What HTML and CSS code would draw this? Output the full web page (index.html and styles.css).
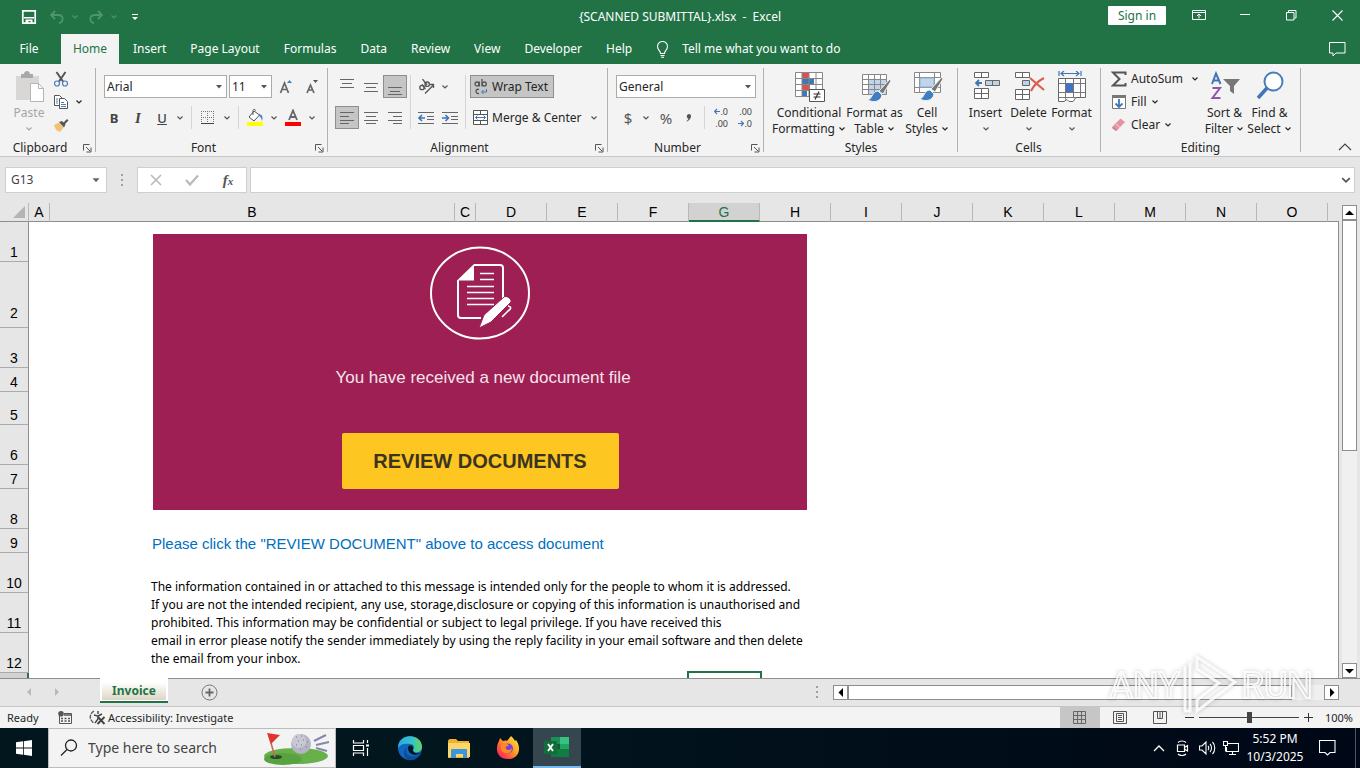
FILE: index.html
```html
<!DOCTYPE html>
<html lang="en">
<head>
<meta charset="utf-8">
<title>{SCANNED SUBMITTAL}.xlsx - Excel</title>
<link rel="stylesheet" href="styles.css">
</head>
<body>
<svg class="defs" aria-hidden="true">
  <symbol id="chev" viewBox="0 0 8 6"><path d="M1.500 1.500 4 4 6.500 1.500" fill="none" stroke="currentColor" stroke-width="1.200"/></symbol>
  <symbol id="tri" viewBox="0 0 8 6"><path d="M1 1h6L4 4.500z" fill="currentColor"/></symbol>
  <symbol id="launch" viewBox="0 0 9 9"><path d="M.5 6.500V.5h6M3 3l4 4M8 3.500V8H3.500" fill="none" stroke="#555"/></symbol>
</svg>

<header class="titlebar">
  <div class="quick">
    <button class="qbtn" aria-label="Save"><svg width="16" height="16" viewBox="0 0 16 16"><path d="M1.800 1.800h12.400v12.400H1.800z" fill="none" stroke="#fff" stroke-width="1.700"/><path d="M3 8h10v1.500H3zM4.500 10.500h7V14h-2v-2H7.500v2h-3z" fill="#fff"/></svg></button>
    <button class="qbtn dim" aria-label="Undo"><svg width="16" height="14" viewBox="0 0 16 14"><path d="M6 1 2 5l4 4M2.500 5H9c6 0 6 7 1 8" fill="none" stroke="currentColor" stroke-width="1.800"/></svg></button>
    <button class="qchev dim" aria-label="Undo list"><svg width="8" height="6"><use href="#chev"/></svg></button>
    <button class="qbtn dim" aria-label="Redo"><svg width="16" height="14" viewBox="0 0 16 14"><path d="M10 1l4 4-4 4M13.500 5H7C1 5 1 12 6 13" fill="none" stroke="currentColor" stroke-width="1.800"/></svg></button>
    <button class="qchev dim" aria-label="Redo list"><svg width="8" height="6"><use href="#chev"/></svg></button>
    <button class="qbtn" aria-label="Customize Quick Access Toolbar"><svg width="8" height="8" viewBox="0 0 8 8"><path d="M1 1.500h6" stroke="#fff"/><path d="M1 4h6L4 7z" fill="#fff"/></svg></button>
  </div>
  <h1 class="doc-title">{SCANNED SUBMITTAL}.xlsx&nbsp; -&nbsp; Excel</h1>
  <div class="window">
    <button class="signin">Sign in</button>
    <button class="wbtn" aria-label="Ribbon display options"><svg width="14" height="12" viewBox="0 0 14 12"><path d="M.5 1.500h13v9H.5zM.5 3.500h13M7 9.500V5M5 7l2-2 2 2" fill="none" stroke="#fff"/></svg></button>
    <button class="wbtn" aria-label="Minimize"><svg width="10" height="10" viewBox="0 0 10 10"><path d="M0 4.500h10" stroke="#fff"/></svg></button>
    <button class="wbtn" aria-label="Restore"><svg width="11" height="11" viewBox="0 0 11 11"><path d="M.5 2.500h7.500v7.500H.5zM2.500 2V.5H10V8H8.500" fill="none" stroke="#fff"/></svg></button>
    <button class="wbtn" aria-label="Close"><svg width="11" height="11" viewBox="0 0 11 11"><path d="M.5.5l10 10M10.500.5l-10 10" stroke="#fff" stroke-width="1.100"/></svg></button>
  </div>
</header>

<nav class="tabs">
  <button class="tab file">File</button>
  <button class="tab on">Home</button>
  <button class="tab">Insert</button>
  <button class="tab">Page Layout</button>
  <button class="tab">Formulas</button>
  <button class="tab">Data</button>
  <button class="tab">Review</button>
  <button class="tab">View</button>
  <button class="tab">Developer</button>
  <button class="tab">Help</button>
  <button class="tab tell"><svg width="13" height="17" viewBox="0 0 13 17"><path d="M4.500 12.500C4.500 9.500 1.500 9 1.500 5.500a5 5 0 0 1 10 0c0 3.500-3 4-3 7zM4.500 14.500h4M5 16.300h3" fill="none" stroke="#fff" stroke-width="1.100"/></svg>Tell me what you want to do</button>
  <button class="comment" aria-label="Comments"><svg width="17" height="15" viewBox="0 0 17 15"><path d="M.5.5h15.500v10.500H7l-3 3v-3H.5z" fill="none" stroke="#fff"/></svg></button>
</nav>

<section class="ribbon">
  <div class="group clipboard">
    <div class="body big-row">
      <button class="big w-paste faded"><svg width="32" height="32" viewBox="0 0 32 32"><path d="M3 5h23v24H3z" fill="#d9d6d6"/><path d="M8 3h3c0-4 6-4 6 0h3v4H8z" fill="#a9a9a9"/><path d="M17.500 12.500h8l5 5v13h-13z" fill="#fff" stroke="#b5b5b5"/><path d="M25.500 12.500v5h5" fill="none" stroke="#b5b5b5"/></svg><span>Paste</span><svg width="8" height="6"><use href="#chev"/></svg></button>
      <div class="stack">
        <button class="line" aria-label="Cut"><svg width="16" height="16" viewBox="0 0 16 16"><path d="M3.500 1 10 10.500M12.500 1 6 10.500" stroke="#555" stroke-width="2" fill="none"/><circle cx="4" cy="12.500" r="2.500" fill="none" stroke="#4a7ebb" stroke-width="1.200"/><circle cx="12" cy="12.500" r="2.500" fill="none" stroke="#4a7ebb" stroke-width="1.200"/></svg></button>
        <button class="line" aria-label="Copy"><svg width="16" height="16" viewBox="0 0 16 16"><path d="M1.500 1.500h5l3 3v7h-8z" fill="#fff" stroke="#555"/><path d="M6.500 4.500h5l3 3v7h-8z" fill="#fff" stroke="#555"/><path d="M8 8.500h3M8 10.500h5M8 12.500h5M3 5h2M3 7h2M3 9h2" stroke="#4a7ebb"/></svg><svg class="far" width="8" height="6"><use href="#chev"/></svg></button>
        <button class="line" aria-label="Format Painter"><svg width="16" height="16" viewBox="0 0 16 16"><path d="M1 8l5-2.500 4.500 5L7 15 3 13z" fill="#f0c274"/><path d="M6 5l3-1 3.500 3.500-1.500 3z" fill="#555"/><path d="M10 6l4-4 1.500 1.500-4 4z" fill="#555"/></svg></button>
      </div>
    </div>
    <div class="caption"><span>Clipboard</span><button class="launch" aria-label="Clipboard options"><svg width="9" height="9"><use href="#launch"/></svg></button></div>
  </div>

  <div class="group font">
    <div class="body rows">
      <div class="row first">
        <span class="combo font-name"><select aria-label="Font"><option>Arial</option></select><svg width="8" height="6"><use href="#tri"/></svg></span>
        <span class="combo font-size"><select aria-label="Font size"><option>11</option></select><svg width="8" height="6"><use href="#tri"/></svg></span>
        <button class="ib" aria-label="Increase font size"><svg width="16" height="16" viewBox="0 0 16 16"><path d="M2.500 14 6.500 4l4 10M4 10.500h5" fill="none" stroke="#666" stroke-width="1.700"/><path d="M9 4l2.500-3L14 4z" fill="#4a7ebb"/></svg></button>
        <button class="ib" aria-label="Decrease font size"><svg width="16" height="16" viewBox="0 0 16 16"><path d="M3 14 6.500 6 10 14M4.500 11h4" fill="none" stroke="#666" stroke-width="1.700"/><path d="M9 1h5l-2.500 3z" fill="#555"/></svg></button>
      </div>
      <div class="row inset">
        <button class="ib glyph"><b>B</b></button>
        <button class="ib glyph serif"><i>I</i></button>
        <button class="ib glyph under"><u>U</u></button>
        <button class="cv" aria-label="Underline styles"><svg width="8" height="6"><use href="#chev"/></svg></button>
        <span class="sep"></span>
        <button class="ib" aria-label="Borders"><svg width="14" height="14" viewBox="0 0 14 14"><path d="M.5 0v13M6.500 0v13M12.500 0v13M0 .5h13M0 6.500h13" stroke="#777" stroke-dasharray="1 1" fill="none"/><path d="M0 12.500h13" stroke="#444"/></svg></button>
        <button class="cv" aria-label="Border styles"><svg width="8" height="6"><use href="#chev"/></svg></button>
        <span class="sep"></span>
        <button class="ib" aria-label="Fill color"><svg width="18" height="17" viewBox="0 0 18 17"><path d="M8 2 3 8l5 4 5.500-6z" fill="#fff" stroke="#555"/><path d="M7 6V1.500c0-1.500 2.500-1.500 2.500 0" fill="none" stroke="#555"/><path d="M13 5c4 1 4 4 3 7-1-3-1-4-3-5z" fill="#4a7ebb"/><path d="M1 13h16v4H1z" fill="#ff0"/></svg></button>
        <button class="cv" aria-label="Fill colors"><svg width="8" height="6"><use href="#chev"/></svg></button>
        <button class="ib" aria-label="Font color"><svg width="18" height="17" viewBox="0 0 18 17"><path d="M5 11 9 1.500 13 11M6.500 8h5" fill="none" stroke="#666" stroke-width="1.800"/><path d="M1 13h16v4H1z" fill="#f00"/></svg></button>
        <button class="cv" aria-label="Font colors"><svg width="8" height="6"><use href="#chev"/></svg></button>
      </div>
    </div>
    <div class="caption"><span>Font</span><button class="launch" aria-label="Font options"><svg width="9" height="9"><use href="#launch"/></svg></button></div>
  </div>

  <div class="group alignment">
    <div class="body blocks">
      <div class="rows">
        <div class="row">
          <button class="ib" aria-label="Top align"><svg width="14" height="18" viewBox="0 0 14 18"><path d="M0 1.500h14M2 5.500h10M0 9.500h14" stroke="#666"/></svg></button>
          <button class="ib" aria-label="Middle align"><svg width="14" height="18" viewBox="0 0 14 18"><path d="M0 5.500h14M2 9.500h10M0 13.500h14" stroke="#666"/></svg></button>
          <button class="ib pressed" aria-label="Bottom align"><svg width="14" height="18" viewBox="0 0 14 18"><path d="M0 9.500h14M2 13.500h10M0 16.500h14" stroke="#666"/></svg></button>
        </div>
        <div class="row">
          <button class="ib pressed" aria-label="Align left"><svg width="14" height="14" viewBox="0 0 14 14"><path d="M0 1.500h14M0 5.500h9M0 9.500h14M0 12.500h9" stroke="#666"/></svg></button>
          <button class="ib" aria-label="Center"><svg width="14" height="14" viewBox="0 0 14 14"><path d="M0 1.500h14M2 5.500h10M0 9.500h14M2 12.500h10" stroke="#666"/></svg></button>
          <button class="ib" aria-label="Align right"><svg width="14" height="14" viewBox="0 0 14 14"><path d="M0 1.500h14M5 5.500h9M0 9.500h14M5 12.500h9" stroke="#666"/></svg></button>
        </div>
      </div>
      <span class="sep tall"></span>
      <div class="rows">
        <div class="row">
          <button class="ib" aria-label="Orientation"><svg width="17" height="16" viewBox="0 0 17 16"><g fill="none" stroke="#555" stroke-width="1.300"><circle cx="4" cy="8.500" r="2.200"/><path d="M4 5.500l3.500 4.500"/><circle cx="9.200" cy="5.200" r="2.200"/><path d="M4.500 0l4.500 6"/><path d="M7 14.500 15.500 6M12 5.500H15.500V9"/></g></svg></button>
          <button class="cv" aria-label="Orientation list"><svg width="8" height="6"><use href="#chev"/></svg></button>
        </div>
        <div class="row">
          <button class="ib" aria-label="Decrease indent"><svg width="16" height="14" viewBox="0 0 16 14"><path d="M0 1.500h16M9 5.500h7M9 8.500h7M0 12.500h16" stroke="#666"/><path d="M7 7H1M4 4 1 7l3 3" fill="none" stroke="#3f76b8" stroke-width="1.600"/></svg></button>
          <button class="ib" aria-label="Increase indent"><svg width="16" height="14" viewBox="0 0 16 14"><path d="M0 1.500h16M9 5.500h7M9 8.500h7M0 12.500h16" stroke="#666"/><path d="M0 7h6M3.500 4l3 3-3 3" fill="none" stroke="#3f76b8" stroke-width="1.600"/></svg></button>
        </div>
      </div>
      <span class="sep tall"></span>
      <div class="rows">
        <div class="row"><button class="txt pressed"><svg width="14" height="18" viewBox="0 0 14 18"><g fill="none" stroke="#555" stroke-width="1.300"><circle cx="3" cy="6" r="2"/><path d="M5.300 3.500v5M8 1v7.500"/><circle cx="10.300" cy="6" r="2"/><path d="M5 11.500c-4-1.500-4 5 0 4"/></g><path d="M12.500 11v3H8M9.500 12 7.500 14l2 2" fill="none" stroke="#3f76b8"/></svg>Wrap Text</button></div>
        <div class="row"><button class="txt merge"><svg width="15" height="15" viewBox="0 0 15 15"><path d="M.5.5h14v14H.5zM.5 4.500h14M.5 10.500h14M7.500.5v4M7.500 10.500v4" fill="#fff" stroke="#555"/><path d="M2.500 7.500h10M4.500 5.500l-2 2 2 2M10.500 5.500l2 2-2 2" fill="none" stroke="#3f76b8"/></svg>Merge &amp; Center</button><button class="cv" aria-label="Merge list"><svg width="8" height="6"><use href="#chev"/></svg></button></div>
      </div>
    </div>
    <div class="caption"><span>Alignment</span><button class="launch" aria-label="Alignment options"><svg width="9" height="9"><use href="#launch"/></svg></button></div>
  </div>

  <div class="group number">
    <div class="body rows">
      <div class="row first"><span class="combo format"><select aria-label="Number format"><option>General</option></select><svg width="8" height="6"><use href="#tri"/></svg></span></div>
      <div class="row">
        <button class="ib glyph large">$</button>
        <button class="cv" aria-label="Currency list"><svg width="8" height="6"><use href="#chev"/></svg></button>
        <button class="ib glyph large">%</button>
        <button class="ib" aria-label="Comma style"><svg width="6" height="8" viewBox="0 0 6 8"><path d="M3 0c3 0 3 5-2 7.500L.5 7C2 6 2.500 5 2.300 4.500 0 4 .5 0 3 0z" fill="#555"/></svg></button>
        <span class="sep"></span>
        <button class="ib dec" aria-label="Increase decimal"><span><svg width="6" height="7" viewBox="0 0 6 7"><path d="M6 3.500H1M3 1 .5 3.500 3 6" fill="none" stroke="#3f76b8" stroke-width="1.200"/></svg>.0</span><span>.00</span></button>
        <button class="ib dec" aria-label="Decrease decimal"><span>.00</span><span><svg width="6" height="7" viewBox="0 0 6 7"><path d="M0 3.500h5M3 1l2.500 2.500L3 6" fill="none" stroke="#3f76b8" stroke-width="1.200"/></svg>.0</span></button>
      </div>
    </div>
    <div class="caption"><span>Number</span><button class="launch" aria-label="Number options"><svg width="9" height="9"><use href="#launch"/></svg></button></div>
  </div>

  <div class="group styles">
    <div class="body big-row">
      <button class="big w-cond"><svg width="32" height="32" viewBox="0 0 32 32"><path d="M2.500 1.500h27v24h-27z" fill="#fff"/><path d="M9 2h7v6H9zM9 14h8v6H9z" fill="#d9534a"/><path d="M9 8h12v6H9zM9 20h5v6H9z" fill="#3f76b8"/><path d="M2.500 1.500h27v24h-27zM2.500 7.500h27M2.500 13.500h27M2.500 19.500h27M9 1.500v24M16 1.500v24M23 1.500v24" fill="none" stroke="#888"/><path d="M16.500 18.500h15v12h-15z" fill="#fff" stroke="#555"/><path d="M20.500 23h7M20.500 26h7M26 20.500l-4 8" stroke="#333" stroke-width="1.200"/></svg><span>Conditional</span><span>Formatting <svg width="8" height="6"><use href="#chev"/></svg></span></button>
      <button class="big w-table"><svg width="32" height="32" viewBox="0 0 32 32"><path d="M3.500 3.500h24v20h-24z" fill="#fff"/><path d="M10 9h18v15H10z" fill="#c0d4ea"/><path d="M3.500 3.500h24v20h-24zM3.500 8.500h24M3.500 13.500h24M3.500 18.500h24M9.500 3.500v20M15.500 3.500v20M21.500 3.500v20" fill="none" stroke="#888"/><path d="M31 8l1 2-8 13-4-3z" fill="#777" stroke="#f3f3f3"/><path d="M19 20c-6 0-5 7-10 9 5 3 13 2 14-5z" fill="#3f7fc1" stroke="#f3f3f3"/></svg><span>Format as</span><span>Table <svg width="8" height="6"><use href="#chev"/></svg></span></button>
      <button class="big w-cell"><svg width="32" height="32" viewBox="0 0 32 32"><path d="M3.500 1.500h26v20h-26z" fill="#fff" stroke="#888"/><path d="M3.500 6.500h26M3.500 16.500h26M8.500 1.500v20M23.500 1.500v20" stroke="#888"/><path d="M9 7h14v9H9z" fill="#c0d4ea" stroke="#8fb0d8"/><path d="M31 6l1 2-8 13-4-3z" fill="#777" stroke="#f3f3f3"/><path d="M19 19c-6 0-5 7-10 9 5 3 13 2 14-5z" fill="#3f7fc1" stroke="#f3f3f3"/></svg><span>Cell</span><span>Styles <svg width="8" height="6"><use href="#chev"/></svg></span></button>
    </div>
    <div class="caption"><span>Styles</span></div>
  </div>

  <div class="group cells">
    <div class="body big-row">
      <button class="big w-insert"><svg width="32" height="32" viewBox="0 0 32 32"><path d="M4.500 1.500h14v5h-14zM11.500 1.500v5M4.500 17.500h14v10h-14zM11.500 17.500v10M4.500 22.500h14" fill="#fff" stroke="#666"/><path d="M15.500 9.500h14v5h-14z" fill="#bcd3ea" stroke="#666"/><path d="M22.500 9.500v5" stroke="#666"/><path d="M12 12H6M9 9l-3 3 3 3" fill="none" stroke="#3f76b8" stroke-width="1.800"/></svg><span>Insert</span><svg width="8" height="6"><use href="#chev"/></svg></button>
      <button class="big w-insert"><svg width="32" height="32" viewBox="0 0 32 32"><path d="M2.500 1.500h14v5h-14zM9.500 1.500v5M2.500 18.500h14v10h-14zM9.500 18.500v10M2.500 23.500h14" fill="#fff" stroke="#666"/><path d="M9.500 9.500h7v5h-7z" fill="#bcd3ea" stroke="#666"/><path d="M17 7l14 12M31 7C25 10 21 14 18 20" fill="none" stroke="#d9604c" stroke-width="2.200"/></svg><span>Delete</span><svg width="8" height="6"><use href="#chev"/></svg></button>
      <button class="big w-insert"><svg width="32" height="32" viewBox="0 0 32 32"><path d="M3 0v5M25 0v5M5 2.500h18M8 0 5 2.500 8 5M20 0l3 2.500L20 5" fill="none" stroke="#3f76b8" stroke-width="1.200"/><path d="M2.500 7.500h27v19H20l-3 4h-4l-2-2-3 2H2.500z" fill="#fff" stroke="#666"/><path d="M2.500 12.500h27M2.500 21.500h27M9.500 7.500v21M17.500 7.500v19M24.500 7.500v19M2.500 26.500h18" fill="none" stroke="#777"/><path d="M10 12h7v9h-7z" fill="#4472c4"/></svg><span>Format</span><svg width="8" height="6"><use href="#chev"/></svg></button>
    </div>
    <div class="caption"><span>Cells</span></div>
  </div>

  <div class="group editing">
    <div class="body big-row">
      <div class="stack wide">
        <button class="line"><svg width="16" height="16" viewBox="0 0 16 16"><path d="M14.500 4V1.500H2L8.500 8 2 14.500h12.500V12" fill="none" stroke="#555" stroke-width="2"/></svg><span>AutoSum</span><svg class="far" width="8" height="6"><use href="#chev"/></svg></button>
        <button class="line"><svg width="16" height="16" viewBox="0 0 16 16"><path d="M1.500 1.500h13v13h-13z" fill="#fff" stroke="#777"/><path d="M1 1h14v3H1z" fill="#777"/><path d="M8 5v8M4.500 9.500 8 13l3.500-3.500" fill="none" stroke="#3f76b8" stroke-width="1.800"/></svg><span>Fill</span><svg width="8" height="6"><use href="#chev"/></svg></button>
        <button class="line"><svg width="16" height="16" viewBox="0 0 16 16"><path d="M2 9l7.500-7.500L14 5 6.500 13z" fill="#e493a5"/><path d="M2 9l4.500 4-1.500 1-4-3z" fill="#d9748b"/><path d="M4.500 6.500 9 10.500" stroke="#f6d5dc"/></svg><span>Clear</span><svg width="8" height="6"><use href="#chev"/></svg></button>
      </div>
      <button class="big w-find"><svg width="32" height="32" viewBox="0 0 32 32"><path d="M3 13 7 2.500 11.500 13M4.500 9.500H10" fill="none" stroke="#3f76b8" stroke-width="2"/><path d="M3.500 17H11L3.500 27H11.500" fill="none" stroke="#9355a8" stroke-width="2"/><path d="M14 8h17l-6 7v8l-4-3v-5z" fill="#777"/></svg><span>Sort &amp;</span><span>Filter <svg width="8" height="6"><use href="#chev"/></svg></span></button>
      <button class="big w-find"><svg width="32" height="32" viewBox="0 0 32 32"><circle cx="19.500" cy="10.500" r="9" fill="#fff" stroke="#4a7ebb" stroke-width="2"/><path d="M13 17 4 27" stroke="#3f76b8" stroke-width="3.500"/></svg><span>Find &amp;</span><span>Select <svg width="8" height="6"><use href="#chev"/></svg></span></button>
    </div>
    <div class="caption"><span>Editing</span></div>
  </div>
  <button class="collapse" aria-label="Collapse ribbon"><svg width="14" height="8" viewBox="0 0 14 8"><path d="M1 7l6-6 6 6" fill="none" stroke="#444" stroke-width="1.200"/></svg></button>
</section>

<section class="formula">
  <label class="namebox"><input type="text" value="G13" aria-label="Name box"><svg width="10" height="7" viewBox="0 0 8 6"><use href="#tri"/></svg></label>
  <span class="dots"></span>
  <div class="fbuttons">
    <button aria-label="Cancel"><svg width="12" height="12" viewBox="0 0 12 12"><path d="M1 1l10 10M11 1 1 11" stroke="#b9b9b9" stroke-width="1.600"/></svg></button>
    <button aria-label="Enter"><svg width="14" height="12" viewBox="0 0 14 12"><path d="M1 6l4 4.500L13 1.500" fill="none" stroke="#b9b9b9" stroke-width="2.200"/></svg></button>
    <button class="fx" aria-label="Insert function"><i>f<small>x</small></i></button>
  </div>
  <label class="finput"><input type="text" aria-label="Formula bar"><svg width="10" height="8" viewBox="0 0 8 6"><path d="M1 1.500 4 4.500 7 1.500" fill="none" stroke="#555" stroke-width="1.400"/></svg></label>
</section>

<main class="sheet">
  <div class="grid">
    <table>
      <colgroup><col class="c-head"><col class="c-a"><col class="c-b"><col class="c-a"><col class="c-n"><col class="c-n"><col class="c-n"><col class="c-n"><col class="c-n"><col class="c-n"><col class="c-n"><col class="c-n"><col class="c-n"><col class="c-n"><col class="c-n"><col class="c-n"><col></colgroup>
      <thead><tr><th class="corner"><svg width="12" height="12" viewBox="0 0 12 12"><path d="M12 0v12H0z" fill="#b4b4b4"/></svg></th><th>A</th><th>B</th><th>C</th><th>D</th><th>E</th><th>F</th><th class="active">G</th><th>H</th><th>I</th><th>J</th><th>K</th><th>L</th><th>M</th><th>N</th><th>O</th><th></th></tr></thead>
      <tbody>
        <tr class="h40"><th>1</th><td colspan="16"></td></tr>
        <tr class="h66"><th>2</th><td colspan="16"></td></tr>
        <tr class="h40"><th>3</th><td colspan="16"></td></tr>
        <tr class="h24"><th>4</th><td colspan="16"></td></tr>
        <tr class="h33"><th>5</th><td colspan="16"></td></tr>
        <tr class="h40"><th>6</th><td colspan="16"></td></tr>
        <tr class="h24"><th>7</th><td colspan="16"></td></tr>
        <tr class="h40"><th>8</th><td colspan="16"></td></tr>
        <tr class="h24"><th>9</th><td></td><td class="note" colspan="15">Please click the "REVIEW DOCUMENT" above to access document</td></tr>
        <tr class="h40"><th>10</th><td colspan="16"></td></tr>
        <tr class="h40"><th>11</th><td colspan="16"></td></tr>
        <tr class="h40"><th>12</th><td colspan="16"></td></tr>
        <tr class="h24 current"><th></th><td colspan="6"></td><td class="selected"></td><td colspan="9"></td></tr>
      </tbody>
    </table>
    <div class="banner">
      <svg width="102" height="94" viewBox="0 0 102 94"><ellipse cx="51" cy="47" rx="49" ry="45.500" fill="none" stroke="#fff" stroke-width="2"/><path d="M29 34v35c0 2 1 3 3 3h20M74 54V22c0-2-1-3-3-3H45" fill="none" stroke="#fff" stroke-width="2"/><path d="M28 34.500 45 18v16.500z" fill="#fff"/><path d="M51 27.500h14M51 33.500h14M38 40.500h27M38 46.500h27M38 52.500h27M38 58.500h27" stroke="#fff" stroke-width="1.600"/><path d="M50 82l5-13 20-18c2-2 8 2 7 5L62 76z" fill="#fff" stroke="#9d1f53"/><path d="M79 60c4 1 3 3 0 5l-6 6" fill="none" stroke="#fff" stroke-width="1.600"/></svg>
      <p>You have received a new document file</p>
      <a class="review" href="#">REVIEW DOCUMENTS</a>
    </div>
    <p class="legal">The information contained in or attached to this message is intended only for the people to whom it is addressed.<br>If you are not the intended recipient, any use, storage,disclosure or copying of this information is unauthorised and<br>prohibited. This information may be confidential or subject to legal privilege. If you have received this<br>email in error please notify the sender immediately by using the reply facility in your email software and then delete<br>the email from your inbox.</p>
  </div>
  <div class="vscroll">
    <button class="sb" aria-label="Scroll up"><svg width="9" height="6" viewBox="0 0 9 6"><path d="M4.500.5 9 5H0z" fill="#000"/></svg></button>
    <div class="vthumb"></div>
    <div class="vtrack"></div>
    <button class="sb" aria-label="Scroll down"><svg width="9" height="6" viewBox="0 0 9 6"><path d="M4.500 5.500 9 1H0z" fill="#000"/></svg></button>
  </div>
</main>

<section class="sheettabs">
  <div class="arrows">
    <button aria-label="Previous sheet"><svg width="6" height="8" viewBox="0 0 6 8"><path d="M5 0v8L1 4z" fill="#b9b9b9"/></svg></button>
    <button aria-label="Next sheet"><svg width="6" height="8" viewBox="0 0 6 8"><path d="M1 0v8l4-4z" fill="#b9b9b9"/></svg></button>
  </div>
  <button class="sheettab">Invoice</button>
  <button class="add" aria-label="New sheet"><svg width="17" height="17" viewBox="0 0 17 17"><circle cx="8.500" cy="8.500" r="7.500" fill="none" stroke="#777"/><path d="M8.500 4.500v8M4.500 8.500h8" stroke="#666" stroke-width="1.800"/></svg></button>
  <span class="dots push"></span>
  <div class="hscroll">
    <button class="sb" aria-label="Scroll left"><svg width="6" height="9" viewBox="0 0 6 9"><path d="M5 0v9L.5 4.500z" fill="#000"/></svg></button>
    <div class="hthumb"></div>
    <div class="htrack"></div>
    <button class="sb" aria-label="Scroll right"><svg width="6" height="9" viewBox="0 0 6 9"><path d="M1 0v9l4.500-4.500z" fill="#000"/></svg></button>
  </div>
</section>

<footer class="status">
  <span class="ready">Ready</span>
  <button aria-label="Record macro" class="macro"><svg width="14" height="13" viewBox="0 0 14 13"><path d="M1.500 4v8.500h12V2.500H6" fill="none" stroke="#555"/><circle cx="3" cy="2.800" r="2.800" fill="#555"/><path d="M6 4h7M3 7.500h2M6.500 7.500h2M10 7.500h2M3 10h2M6.500 10h2M10 10h2" stroke="#555" stroke-width="1.300"/></svg></button>
  <button class="access"><svg width="17" height="15" viewBox="0 0 17 15"><path d="M5 1C0 4 0 10 5 13" fill="none" stroke="#555" stroke-width="1.300" stroke-dasharray="4 1"/><path d="M5 5l4 1v3l-3 4M9 6l4-2M9 1v3" fill="none" stroke="#444" stroke-width="1.400"/><path d="M9 7l6.500 7M15.500 7l-7 7" stroke="#444" stroke-width="1.900"/></svg>Accessibility: Investigate</button>
  <div class="views">
    <button class="on" aria-label="Normal"><svg width="14" height="13" viewBox="0 0 14 13"><path d="M.5.5h12v12H.5zM.5 4.500h12M.5 8.500h12M4.500.5v12M8.500.5v12" fill="none" stroke="#666"/></svg></button>
    <button aria-label="Page layout"><svg width="14" height="13" viewBox="0 0 14 13"><path d="M.5.5h13v12H.5zM3.500 2.500h7v8h-7zM5 4.500h4M5 6.500h4M5 8.500h4" fill="none" stroke="#555"/></svg></button>
    <button aria-label="Page break preview"><svg width="14" height="13" viewBox="0 0 14 13"><path d="M.5.5h13v12H.5zM4.500.5v7h5v-7M7 .5v7" fill="none" stroke="#555"/></svg></button>
  </div>
  <button class="zoom-step" aria-label="Zoom out"><svg width="9" height="9" viewBox="0 0 9 9"><path d="M0 4.500h9" stroke="#333"/></svg></button>
  <input class="zoom" type="range" min="0" max="100" value="50" aria-label="Zoom">
  <button class="zoom-step" aria-label="Zoom in"><svg width="9" height="9" viewBox="0 0 9 9"><path d="M0 4.500h9M4.500 0v9" stroke="#333"/></svg></button>
  <span class="percent">100%</span>
</footer>

<div class="taskbar">
  <button class="tb" aria-label="Start"><svg width="16" height="16" viewBox="0 0 16 16"><path d="M0 2.300 7 1.300V7.600H0zM7.800 1.200 16 0v7.600H7.800zM0 8.400h7v6.300L0 13.700zM7.800 8.400H16V16l-8.200-1.200z" fill="#fff"/></svg></button>
  <label class="search"><svg width="18" height="18" viewBox="0 0 18 18"><circle cx="11" cy="6.500" r="5.500" fill="none" stroke="#222" stroke-width="1.300"/><path d="M7 10.500 1 16.500" stroke="#222" stroke-width="1.300"/></svg><input type="text" placeholder="Type here to search" aria-label="Type here to search"><svg width="68" height="36" viewBox="0 0 68 36"><ellipse cx="33" cy="26" rx="32" ry="8" fill="#68b04a"/><ellipse cx="20" cy="29" rx="19" ry="6" fill="#58a23f"/><ellipse cx="13" cy="27" rx="6" ry="2" fill="#234c2b"/><path d="M6 6l6 21" stroke="#cc6a58" stroke-width="1.600"/><path d="M4 3l13 2-9 9z" fill="#e0342e"/><circle cx="38" cy="14" r="10" fill="#b5b4c4"/><circle cx="36" cy="11" r="7" fill="#c9c9d6"/><path d="M33 7h1M38 6h1M35 11h1M40 10h1M44 12h1M33 15h1M38 15h1M43 17h1M37 19h1" stroke="#8e8da4" stroke-width="1.500"/><path d="M51 11l12-6M53 15l13-3M53 18l11 3" stroke="#8587ad" stroke-width="2"/></svg></label>
  <div class="apps">
    <button class="tb" aria-label="Task view"><svg width="17" height="16" viewBox="0 0 17 16"><path d="M1.500 0v3h10V0M1.500 5.500h10v5h-10zM1.500 16v-3h10v3M15.500 0v3M15.500 8v8" fill="none" stroke="#fff" stroke-width="1.200"/><path d="M14 4.500h3v2h-3z" fill="#fff"/></svg></button>
    <button class="tb" aria-label="Edge"><svg width="26" height="26" viewBox="0 0 26 26"><defs><linearGradient id="eg" x1="0" x2="1"><stop offset="0" stop-color="#2aa7e8"/><stop offset=".6" stop-color="#35c5c4"/><stop offset="1" stop-color="#6ad35a"/></linearGradient></defs><circle cx="13" cy="13" r="12" fill="#1167bd"/><path d="M1 13C1 -3 25 -2 25 12c0 6-9 7-9 3 2-2 1-6-3-6C8 8 3 9 1 13z" fill="url(#eg)"/><path d="M9.500 13c-2 6 3 11 13 7-3 5-8 6-11 5-5-2-6-9-2-12z" fill="#0c4c98"/><path d="M11 14c-1-3 3-5 5-2 1 2-1 3 0 4 2 3 5 3 8 1-4 5-12 3-13-3z" fill="#02161e"/></svg></button>
    <button class="tb" aria-label="File Explorer"><svg width="22" height="19" viewBox="0 0 22 19"><path d="M0 2c0-1 1-2 2-2h6l2 2h11v17H0z" fill="#f0b030"/><path d="M0 4h22v14H0z" fill="#fcd667"/><path d="M4 10h14c1 0 1 1 1 1v8h-4v-4H8v4H3v-7c0-1 0-2 1-2z" fill="#3b97dd"/></svg></button>
    <button class="tb" aria-label="Firefox"><svg width="24" height="24" viewBox="0 0 24 24"><defs><linearGradient id="fg" x1="1" y1="0" x2="0" y2="1"><stop offset="0" stop-color="#fff04a"/><stop offset=".45" stop-color="#ff9a22"/><stop offset=".8" stop-color="#ff3850"/><stop offset="1" stop-color="#e31587"/></linearGradient></defs><path d="M3 5l1-3 3 3c1 0 3-1 4 0l4-5c2 2 3 3 4 5l1-1c6 8 3 19-8 19C0 23-1 12 3 5z" fill="url(#fg)"/><circle cx="12" cy="12.500" r="5" fill="#7542d6"/><path d="M5 9c3-2 6-2 8 1-3 0-4 1-3 3 2 2 4 1 6-1 0 4-3 6-6 5-4 0-6-4-5-8z" fill="#ff8a24"/></svg></button>
    <button class="tb running" aria-label="Excel"><svg width="26" height="22" viewBox="0 0 26 22"><path d="M7 1h18v20H7z" fill="#21a366"/><path d="M7 1h9v7H7z" fill="#1b8f58"/><path d="M16 1h9v7h-9z" fill="#33c481"/><path d="M7 13h18v8H7z" fill="#107c41"/><path d="M7 8h9v5H7z" fill="#185c37"/><path d="M0 5h13v13H0z" fill="#0f6f3a"/><path d="M4 8l5 7M9 8l-5 7" stroke="#fff" stroke-width="1.900"/></svg></button>
  </div>
  <div class="tray">
    <button aria-label="Show hidden icons"><svg width="12" height="8" viewBox="0 0 12 8"><path d="M1 7l5-5 5 5" fill="none" stroke="#fff" stroke-width="1.300"/></svg></button>
    <button aria-label="Meet now"><svg width="14" height="16" viewBox="0 0 14 16"><path d="M1.500 5h7v6.500h-7zM8.500 7.500l3-2V11l-3-2M2 2.500c2-2 6-2 8 0M2 14c2 2 6 2 8 0" fill="none" stroke="#fff" stroke-width="1.200"/></svg></button>
    <button aria-label="Volume"><svg width="17" height="14" viewBox="0 0 17 14"><path d="M.5 5h2.500l4-4v12l-4-4H.5zM9 5c1 1 1 3 0 4M11 3c2 2 2 6 0 8M13.500 1c3 3 3 9 0 12" fill="none" stroke="#fff" stroke-width="1.100"/></svg></button>
    <button aria-label="Network"><svg width="16" height="14" viewBox="0 0 16 14"><path d="M5 2.500h10.500v8H3.500V6M9.500 10.500v3M6 13.500h7M.5.500h4v4h-4zM2.500 4.500v6" fill="none" stroke="#fff" stroke-width="1.100"/></svg></button>
    <time class="clock"><span>5:52 PM</span><span>10/3/2025</span></time>
    <button class="notif" aria-label="Notifications"><svg width="17" height="16" viewBox="0 0 17 16"><path d="M.5.5h15.500v12H11l-2.500 2.500L6 12.500H.5z" fill="none" stroke="#fff" stroke-width="1.100"/></svg></button>
    <span class="peek"></span>
  </div>
</div>

<div class="watermark" aria-hidden="true"><span>ANY</span><svg width="58" height="64" viewBox="0 0 58 64"><path d="M8 8v49H3V12M15 3l38 25L15 57V46l22-17L15 15z" fill="none" stroke="#fff" stroke-opacity=".85" stroke-width="3"/></svg><span>RUN</span></div>
</body>
</html>
```
FILE: styles.css
```css
* { box-sizing: border-box; }
body {
  margin: 0;
  height: 100vh;
  display: flex;
  flex-direction: column;
  overflow: hidden;
  font: 12px/16px "Noto Sans", "Open Sans", sans-serif;
  color: #262626;
  background: #e6e6e6;
}
button, input, select { font: inherit; color: inherit; border: 0; margin: 0; padding: 0; background: none; border-radius: 0; }
button { display: flex; align-items: center; justify-content: center; white-space: nowrap; flex: none; }
svg { display: block; flex: none; }
h1, p { margin: 0; font: inherit; }
.defs { position: absolute; width: 0; height: 0; }

/* title bar */
.titlebar { display: grid; grid-template-columns: 1fr auto 1fr; height: 34px; background: #217346; color: #fff; }
.quick { display: flex; align-items: center; padding-left: 17px; }
.qbtn { width: 24px; height: 24px; }
.qchev { width: 12px; height: 24px; }
.qchev + .qbtn { margin-left: 3px; }
.qbtn + .qbtn { margin-left: 4px; }
.dim { color: #4f9470; }
.doc-title { align-self: center; }
.window { display: flex; justify-content: flex-end; align-items: flex-start; }
.signin { width: 58px; height: 19px; margin: 6px 10px 0 0; background: #fff; color: #217346; border-radius: 1px; }
.wbtn { width: 46px; height: 30px; }

/* ribbon tabs */
.tabs { display: flex; height: 30px; background: #217346; color: #fff; }
.tab { padding: 0 12px; }
.tab.file { width: 58px; margin-right: 3px; }
.tab.on { width: 58px; margin-right: 2px; background: #f3f3f3; color: #217346; }
.tell { gap: 13px; }
.comment { margin-left: auto; width: 46px; }

/* ribbon */
.ribbon { display: flex; height: 93px; background: #f3f3f3; border-bottom: 1px solid #c8c8c8; }
.group { display: flex; flex-direction: column; padding: 0 1px 0 7px; margin-top: 4px; background: linear-gradient(#b1b1b1, #b1b1b1) right top / 1px 84px no-repeat; }
.clipboard { width: 96px; padding-left: 8px; }
.font { width: 232px; }
.alignment { width: 280px; }
.number { width: 156px; }
.styles { width: 194px; padding-left: 8px; }
.cells { width: 143px; padding-left: 6px; }
.editing { width: 200px; }
.caption { display: flex; height: 16px; margin-left: -7px; }
.caption span { flex: 1; text-align: center; }
.launch { width: 16px; }
.body { flex: 1; }
.rows { display: flex; flex-direction: column; gap: 8px; }
.group > .rows, .blocks { padding-top: 7px; }
.blocks { display: flex; }
.row { display: flex; height: 23px; }
.row.inset { margin-left: -2px; }
.row.first { gap: 2px; }
.font .row.first { padding-left: 1px; }
.ib { width: 24px; height: 23px; color: #444; }
.cv { width: 14px; height: 23px; color: #555; }
.glyph { font-size: 13px; padding-left: 2px; }
.glyph.serif { font-family: "Liberation Serif", serif; font-size: 15px; font-weight: bold; }
.glyph.under { font-weight: 500; }
.glyph.large { font-size: 15px; color: #555; }
.pressed { background: #c5c5c5; border: 1px solid #8e8e8e; }
.sep { width: 1px; margin: 0 4px; background: #d5d5d5; flex: none; }
.number .sep { margin: 0 3px; }
.sep.tall { margin: 0 3px; height: 54px; }
.dec { flex-direction: column; align-items: flex-end; padding-right: 4px; font-size: 9px; line-height: 12px; }
.dec span { display: flex; align-items: center; }
.txt { height: 23px; padding: 0 5px 0 3px; gap: 4px; }
.blocks > .rows:last-child { padding-left: 1px; }
.combo { display: grid; align-items: center; height: 23px; background: #fff; border: 1px solid #ababab; }
.combo select, .combo svg { grid-area: 1 / 1; }
.combo svg { justify-self: end; margin-right: 3px; color: #555; pointer-events: none; }
.combo select { appearance: none; width: 100%; height: 100%; padding-left: 2px; }
.font-name { width: 123px; }
.font-size { width: 43px; }
.format { width: 140px; margin-left: 1px; }

.big-row { display: flex; }
.big { flex-direction: column; justify-content: flex-start; padding-top: 3px; }
.big > svg { color: #555; }
.big > svg + span { margin-top: 2px; }
.big > span { display: flex; align-items: center; gap: 3px; line-height: 16px; }
.big > span + svg { margin-top: 5px; }
.w-paste { width: 42px; }
.w-cond { width: 74px; }
.w-table { width: 57px; }
.w-cell { width: 48px; }
.w-insert { width: 43px; }
.w-find { width: 45px; }
.faded { color: #a6a6a6; }
.faded > svg { color: #a6a6a6; }
.stack { width: 36px; margin-top: -1px; }
.stack.wide { width: 94px; }
.line { width: 100%; height: 23px; justify-content: flex-start; gap: 4px; padding: 0 3px; }
.line .far { margin-left: auto; }
.collapse { margin-left: auto; align-self: flex-end; width: 30px; height: 18px; }

/* formula bar */
.formula { display: flex; padding: 10px 5px; height: 46px; }
.namebox, .finput { display: flex; align-items: center; background: #fff; border: 1px solid #cfcfcf; color: #444; }
.namebox { width: 102px; padding: 0 5px; }
.namebox input { flex: 1; min-width: 0; }
.namebox svg { color: #666; }
.dots { width: 2px; height: 12px; margin: 7px 14px; background: repeating-linear-gradient(#a0a0a0 0 2px, transparent 2px 5px); flex: none; }
.fbuttons { display: flex; width: 110px; background: #fff; border: 1px solid #cfcfcf; }
.fbuttons button { flex: 1; }
.fx { font: 15px "Liberation Serif", serif; color: #555; font-weight: bold; }
.fx small { font-size: 11px; }
.finput { flex: 1; margin-left: 3px; padding: 0 3px; }
.finput input { flex: 1; }

/* worksheet */
.sheet { flex: 1; min-height: 0; display: flex; }
.grid { flex: 1; min-width: 0; position: relative; overflow: hidden; }
table { width: 100%; table-layout: fixed; border-collapse: separate; border-spacing: 0; font: 14px/16px "Liberation Sans", Arial, sans-serif; color: #000; }
.c-head { width: 29px; }
.c-a { width: 21px; }
.c-b { width: 405px; }
.c-n { width: 71px; }
th { padding: 0; font-weight: normal; }
thead th { height: 19px; border-right: 1px solid #b8b8b8; border-bottom: 1px solid #8e8e8e; vertical-align: bottom; line-height: 17px; }
thead th:last-child { border-right: 0; }
.corner svg { margin: 0 3px 3px auto; }
thead .active { background: #d2d2d2; color: #217346; border-bottom: 2px solid #217346; line-height: 16px; }
tbody th { vertical-align: bottom; border-right: 1px solid #8e8e8e; border-bottom: 1px solid #ababab; line-height: 18px; }
td { padding: 0; background: #fff; }
tbody td:last-child { border-right: 1px solid #8e8e8e; }
.h24 { height: 24px; }
.h33 { height: 33px; }
.h40 { height: 40px; }
.h66 { height: 66px; }
.h66 th { padding-bottom: 5px; }
.current th { background: #d2d2d2; border-right: 2px solid #217346; }
td.note { padding-left: 102px; color: #0070c0; font-size: 15px; line-height: 18px; vertical-align: bottom; }
.selected { outline: 2px solid #217346; }
.banner { position: absolute; left: 153px; top: 31px; width: 654px; height: 276px; background: #9d1f53; display: flex; flex-direction: column; align-items: center; padding-top: 12px; color: #f5e4ec; font: 17px/24px "Liberation Sans", Arial, sans-serif; }
.banner p { margin: 26px 0 43px 6px; }
.review { display: flex; align-items: center; justify-content: center; width: 277px; height: 56px; background: #fdc620; border-radius: 2px; color: #3a3420; font-size: 20px; font-weight: bold; text-decoration: none; }
.legal { position: absolute; left: 151px; top: 375px; white-space: nowrap; font: 12px/18px "Noto Sans", sans-serif; color: #000; }

/* scroll bars */
.sb { width: 15px; height: 15px; background: #fff; border: 1px solid #8e8e8e; }
.vscroll { width: 21px; padding: 2px 3px 0; display: flex; flex-direction: column; }
.vthumb { height: 231px; background: #fff; border: 1px solid #8e8e8e; }
.vtrack { flex: 1; background: #f0f0f0; }
.sheettabs { display: flex; height: 29px; border-top: 1px solid #8e8e8e; border-bottom: 1px solid #c6c6c6; }
.arrows { display: flex; width: 100px; padding-left: 15px; }
.arrows button { width: 28px; height: 26px; }
.sheettab { width: 68px; height: 23px; margin-top: -1px; padding-top: 4px; background: linear-gradient(#fff 20%, #ddd6c6); border: solid #fff; border-width: 0 2px 1px; box-shadow: 0 2px #217346; color: #217346; font-weight: bold; }
.add { width: 34px; height: 26px; margin-left: 24px; }
.push { margin: 7px 15px 0 auto; }
.hscroll { display: flex; width: 506px; margin: 6px 21px 0 0; height: 15px; }
.hthumb { flex: 1; background: #fff; border: 1px solid #8e8e8e; }
.htrack { width: 32px; background: #f0f0f0; }

/* status bar */
.status { display: flex; align-items: center; height: 21px; background: #f3f3f3; font-size: 11px; padding: 0 7px 0 7px; }
.ready { width: 50px; }
.macro { width: 16px; }
.access { margin-left: 16px; gap: 2px; }
.views { display: flex; margin-left: auto; height: 100%; }
.views button { width: 40px; }
.views .on { background: #c6c6c6; }
.zoom-step { width: 19px; height: 20px; }
.zoom { appearance: none; width: 100px; height: 20px; background: linear-gradient(#444, #444) center / 100% 1px no-repeat; }
.zoom::-webkit-slider-thumb { appearance: none; width: 5px; height: 11px; background: #444; }
.percent { width: 35px; text-align: right; }

/* taskbar */
.taskbar { display: flex; height: 40px; background: linear-gradient(90deg, #02161e 30%, #000716); color: #fff; flex: none; }
.tb { width: 48px; height: 40px; }
.search { display: flex; align-items: center; width: 288px; background: #f3f3f3; border: 1px solid #bbb; padding: 0 4px 0 11px; flex: none; }
.search input { flex: 1; min-width: 0; margin-left: 10px; font-size: 14px; line-height: 20px; color: #333; }
.search input::placeholder { color: #444; }
.apps { display: flex; gap: 1px; }
.apps .tb:first-child { margin-right: 1px; }
.running { background: #36464f; border-bottom: 2px solid #76b9ed; }
.tray { display: flex; align-items: center; margin-left: auto; }
.tray button { width: 24px; height: 40px; }
.clock { display: flex; flex-direction: column; width: 64px; text-align: center; line-height: 18px; }
.tray .notif { width: 40px; }
.peek { width: 1px; height: 40px; margin: 0 4px 0 8px; background: #4d5560; }

.watermark { position: absolute; right: 47px; bottom: 50px; display: flex; align-items: center; gap: 2px; font: 36px/40px "Liberation Sans Narrow", "Roboto", sans-serif; color: transparent; -webkit-text-stroke: 2px rgba(255, 255, 255, .85); filter: drop-shadow(0 0 2px rgba(0, 0, 0, .25)); pointer-events: none; }
```
